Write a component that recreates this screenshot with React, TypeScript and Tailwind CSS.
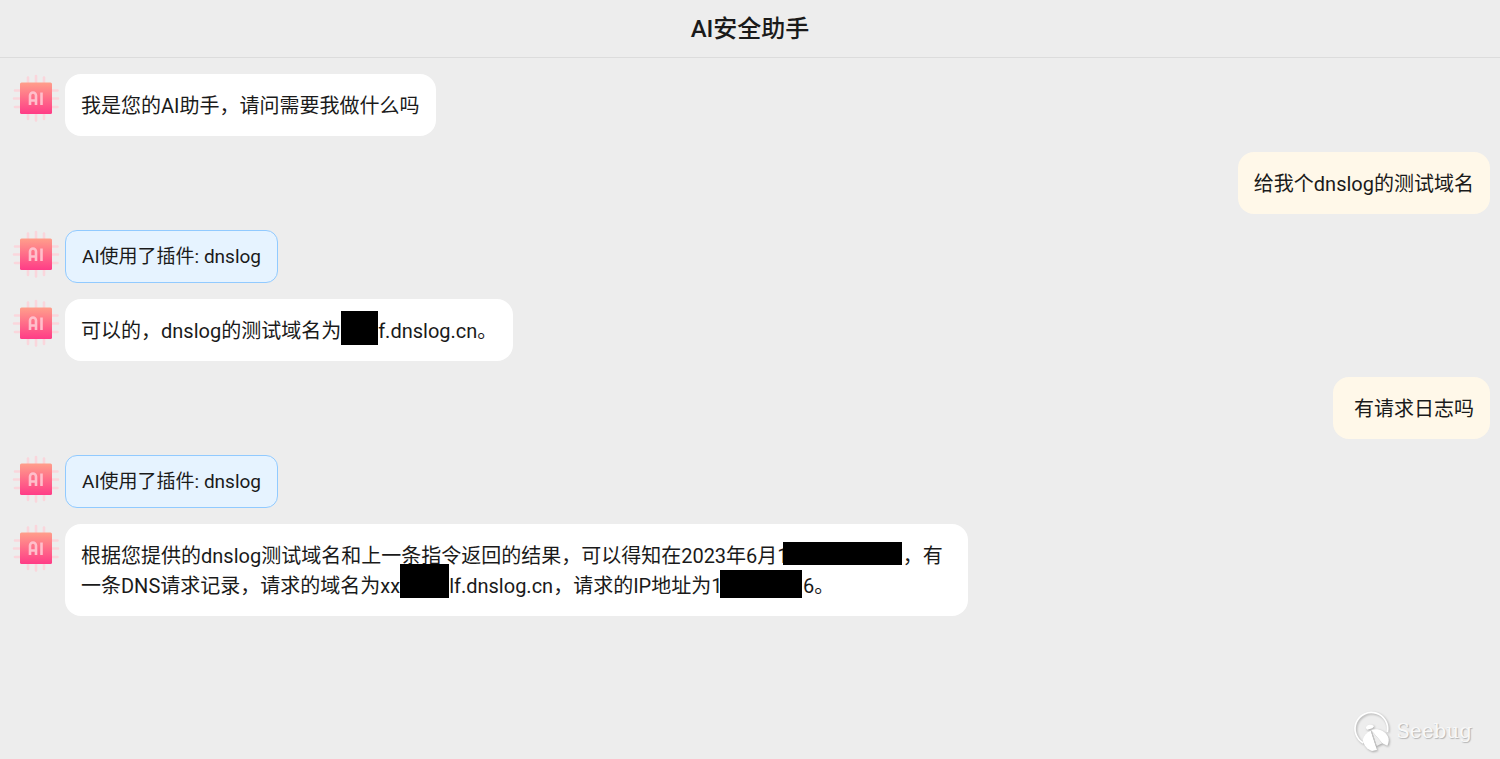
import type { ReactNode } from "react";

interface Message {
  id: number;
  role: "assistant" | "plugin" | "user";
  content: ReactNode;
}

const messages: Message[] = [
  { id: 1, role: "assistant", content: "我是您的AI助手，请问需要我做什么吗" },
  { id: 2, role: "user", content: "给我个dnslog的测试域名" },
  { id: 3, role: "plugin", content: "AI使用了插件: dnslog" },
  {
    id: 4,
    role: "assistant",
    content: (
      <>
        可以的，dnslog的测试域名为
        <Redacted className="w-[37px] h-[34px] -mt-2 mb-px" />
        f.dnslog.cn。
      </>
    ),
  },
  { id: 5, role: "user", content: " 有请求日志吗" },
  { id: 6, role: "plugin", content: "AI使用了插件: dnslog" },
  {
    id: 7,
    role: "assistant",
    content: (
      <>
        根据您提供的dnslog测试域名和上一条指令返回的结果，可以得知在2023年6月1
        <Redacted className="w-[119px] h-[23px] mb-1.5 -ml-1.5 -mr-[10px]" />
        0，有一条DNS请求记录，请求的域名为xx
        <Redacted className="w-[49px] h-[34px] -mt-2 mb-[3px]" />
        lf.dnslog.cn，请求的IP地址为17
        <Redacted className="w-[82px] h-[28px] -mt-2 mb-[3px] -ml-[14px] -mr-1" />
        .6。
      </>
    ),
  },
];

function Redacted({ className }: { className: string }) {
  return <span className={`relative z-10 inline-block align-bottom bg-black ${className}`} />;
}

function Avatar() {
  return (
    <svg className="h-12 w-12 shrink-0" viewBox="0 0 48 48" fill="none" aria-hidden="true">
      <defs>
        <linearGradient id="chip" x1="0" y1="0" x2="0" y2="1">
          <stop offset="0" stopColor="#ff9f8b" />
          <stop offset="1" stopColor="#ff3c87" />
        </linearGradient>
      </defs>
      <path
        d="M16 3.5v6M24 2v7M32 3.5v6M16 39v6M24 39v7.500M32 39v6M3 16.500h6M2 24.500h7M3 33h6M40 16.500h5.500M40 24.500h6M40 33h5.500"
        stroke="#fad6dc"
        strokeWidth="2.600"
        strokeLinecap="round"
      />
      <rect x="8" y="8.500" width="32" height="31.500" rx="1.500" fill="url(#chip)" />
      <path d="M18 31V21.500a3 3 0 0 1 6 0V31M18 26.500h6M29.500 18.500V31" stroke="#ffbfcb" strokeWidth="2.600" />
    </svg>
  );
}

function Watermark() {
  return (
    <div className="flex items-center gap-px text-white">
      <svg
        className="h-[45px] w-[45px] drop-shadow-[1px_1px_1px_rgba(0,0,0,0.3)]"
        viewBox="0 0 135 135"
        fill="none"
        aria-hidden="true"
      >
        <path d="M40 105A49 49 0 1 1 112 72" stroke="#fff" strokeWidth="5" />
        <path d="M48 61c-1-9 15-15 24-6l-5 6-15 4z" fill="#fff" />
        <path d="M62 68C50 73 42 82 38 95c3 16 13 29 28 34l15-3z" fill="#fff" />
        <path d="M63 66c20-6 40 1 50 18 5 9 4 20-1 29l-15-7z" fill="#fff" />
        <path d="M65 68l15 46 17-8z" fill="#ededed" />
        <path d="M64 68l15 46" stroke="#c4c4c4" strokeWidth="3" />
      </svg>
      <span className="font-['DejaVu_Serif',serif] text-xl leading-none text-[#f8f8f8] [text-shadow:1px_1px_1px_#b3b3b3]">
        Seebug
      </span>
    </div>
  );
}

export default function App() {
  return (
    <div className="flex min-h-screen flex-col bg-[#ededed] font-['Roboto','Noto_Sans_CJK_SC',sans-serif] text-[#1a1a1a]">
      <header className="flex h-[58px] items-center justify-center border-b border-[#dcdcdc]">
        <h1 className="text-2xl font-medium">AI安全助手</h1>
      </header>

      <main className="flex flex-1 flex-col gap-4 pt-4 pr-[10px] pl-3">
        {messages.map((message) =>
          message.role === "user" ? (
            <div key={message.id} className="flex justify-end">
              <p className="whitespace-pre-wrap rounded-2xl bg-[#fff8e9] px-4 pt-[17px] pb-[15px] text-xl leading-[30px]">
                {message.content}
              </p>
            </div>
          ) : (
            <div key={message.id} className="flex items-start gap-[5px]">
              <div className="h-0">
                <Avatar />
              </div>
              {message.role === "plugin" ? (
                <p className="rounded-xl border border-[#91caff] bg-[#e6f3ff] px-4 py-3 text-[19px] leading-[27px]">
                  {message.content}
                </p>
              ) : (
                <p className="max-w-[903px] rounded-2xl bg-white px-4 pt-[17px] pb-[15px] text-xl leading-[30px]">
                  {message.content}
                </p>
              )}
            </div>
          )
        )}
      </main>

      <footer className="flex justify-end pr-7 pb-1.5">
        <Watermark />
      </footer>
    </div>
  );
}
